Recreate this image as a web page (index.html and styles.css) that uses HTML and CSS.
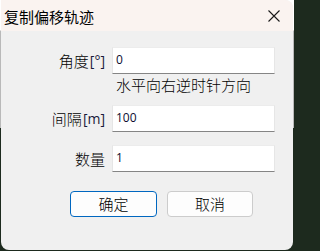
FILE: index.html
```html
<!DOCTYPE html>
<html lang="zh-CN">
<head>
<meta charset="utf-8">
<title>复制偏移轨迹</title>
<link rel="stylesheet" href="styles.css">
</head>
<body>
<div class="screen">
<div class="window">
  <div class="titlebar">
    <span class="title">复制偏移轨迹</span>
    <span class="close">
      <svg width="12" height="12" viewBox="0 0 12 12"><path d="M0.5 0.5 L11.5 11.5 M11.5 0.5 L0.5 11.5" stroke="#1a1a1a" stroke-width="1.1" fill="none"/></svg>
    </span>
  </div>
  <div class="content">
    <div class="form">
      <label class="label">角度<span class="unit">[°]</span></label>
      <div class="input">0</div>
      <div></div>
      <div class="hint">水平向右逆时针方向</div>
      <label class="label">间隔<span class="unit">[m]</span></label>
      <div class="input">100</div>
      <div class="spacer"></div>
      <div class="spacer"></div>
      <label class="label">数量</label>
      <div class="input">1</div>
    </div>
    <div class="buttons">
      <button class="btn primary">确定</button>
      <button class="btn">取消</button>
    </div>
  </div>
</div>
</div>
</body>
</html>
```
FILE: styles.css
```css
html, body {
  margin: 0;
  padding: 0;
  background: #1d2a1e;
}
body {
  font-family: "Noto Sans CJK SC", "Noto Sans", sans-serif;
}
.screen {
  width: 294px;
  height: 251px;
  background: linear-gradient(to bottom, #ffffff 0px, #ffffff 30px, #b9b9b9 31px, #b9b9b9 128px, #1d2a1e 128px, #1d2a1e 251px);
  overflow: hidden;
}
.window {
  margin-left: 1px;
  width: 292px;
  height: 250px;
  background: #f0f0f0;
  border-radius: 0 8px 8px 8px;
  overflow: hidden;
}
.titlebar {
  height: 31px;
  background: #faf3f0;
  display: flex;
  align-items: center;
  justify-content: space-between;
  padding: 0 13px 0 3px;
}
.title {
  font-size: 15px;
  color: #000;
  line-height: 31px;
  padding-top: 1px;
}
.close {
  display: flex;
  width: 12px;
  height: 12px;
}
.content {
  padding-top: 16px;
}
.form {
  display: grid;
  grid-template-columns: 104px 163px;
  column-gap: 7px;
  grid-template-rows: 27px 31px 27px 13px 27px;
}
.label {
  display: flex;
  align-items: center;
  justify-content: flex-end;
  font-size: 15px;
  font-weight: 300;
  color: #000;
}
.unit {
  font-family: "Open Sans", "Noto Sans", sans-serif;
  font-size: 14px;
  font-weight: 400;
  color: #1a1a3a;
  margin-left: 1px;
}
.input {
  box-sizing: border-box;
  height: 27px;
  background: #ffffff;
  border-left: 1px solid #e6e6e6;
  border-right: 1px solid #e6e6e6;
  border-top: 1px solid #ececec;
  border-bottom: 1px solid #858585;
  font-family: "Open Sans", "Noto Sans", sans-serif;
  font-size: 12px;
  color: #0c0c30;
  padding: 3px 0 0 3px;
  line-height: 18px;
}
.hint {
  font-size: 15px;
  font-weight: 300;
  color: #000;
  padding-left: 4px;
  line-height: 20px;
  padding-top: 1px;
}
.buttons {
  display: flex;
  gap: 10px;
  margin-top: 19px;
  padding-left: 69px;
}
.btn {
  box-sizing: border-box;
  width: 86px;
  height: 26px;
  border: 1px solid #cccccc;
  border-radius: 4px;
  background: #fdfdfd;
  font-family: "Noto Sans CJK SC", "Noto Sans", sans-serif;
  font-size: 15px;
  font-weight: 300;
  color: #000;
  padding: 0;
  line-height: 22px;
}
.btn.primary {
  border-color: #0067c0;
  width: 87px;
}
```
